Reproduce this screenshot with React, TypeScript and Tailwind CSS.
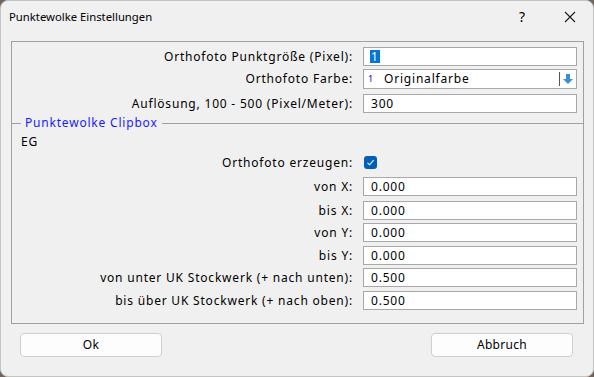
import React from 'react';

type FieldRowProps = {
  label: string;
  value: React.ReactNode;
  top: string;
};

const uiFont = { fontFamily: '"Noto Sans", "Liberation Sans", sans-serif' };

function FieldRow({ label, value, top }: FieldRowProps) {
  return (
    <div className={`flex items-center h-[19px] ${top}`}>
      <div className="w-[342px] text-right pr-[1px] leading-none">{label}</div>
      <div className="ml-[9px] w-[214px] h-[19px] bg-white border border-[#a8a8a8] flex items-center pl-[7px] leading-none">
        {value}
      </div>
    </div>
  );
}

export default function App() {
  return (
    <div className="w-[594px] h-[377px] bg-[#6f6660]" style={uiFont}>
      <div className="w-[594px] h-[377px] rounded-[8px] border border-[#c4c4c4] bg-[#f0f0f0] flex flex-col text-[12px] text-black overflow-hidden">
        {/* Title bar */}
        <div className="h-[32px] flex items-center pl-[8px] shrink-0">
          <span className="flex-1 leading-none text-[11.3px]">Punktewolke Einstellungen</span>
          <span className="w-[20px] text-center text-[14px] leading-none mr-[32px]">?</span>
          <svg width="12" height="12" viewBox="0 0 12 12" className="mr-[17px]">
            <path d="M1 1 L11 11 M11 1 L1 11" stroke="#1a1a1a" strokeWidth="1.1" />
          </svg>
        </div>

        {/* Group */}
        <div className="ml-[10px] mt-[8px] w-[573px] h-[283px] border border-[#a0a0a0] flex flex-col shrink-0 tracking-[0.8px]">
          <FieldRow
            label="Orthofoto Punktgröße (Pixel):"
            value={<span className="bg-[#0078d7] text-white px-[1px] -ml-[1px] leading-[13px]">1</span>}
            top="mt-[5px]"
          />
          <div className="flex items-center h-[20px] mt-[3px]">
            <div className="w-[342px] text-right pr-[1px] leading-none">Orthofoto Farbe:</div>
            <div className="ml-[9px] w-[214px] h-[20px] bg-white border border-[#a8a8a8] flex items-center leading-none">
              <span className="text-[9px] text-[#0000e0] ml-[4px] w-[16px] -mt-[2px] tracking-normal">1</span>
              <span className="flex-1">Originalfarbe</span>
              <div className="w-px h-[14px] bg-[#555]" />
              <svg width="16" height="12" viewBox="0 0 16 12">
                <path d="M6 1 H10 V6 H13 L8 11 L3 6 H6 Z" fill="#3b8fd4" />
              </svg>
            </div>
          </div>
          <FieldRow label="Auflösung, 100 - 500 (Pixel/Meter):" value="300" top="mt-[5px]" />

          {/* Separator */}
          <div className="flex items-center h-[14px] mt-[3px] -mx-px">
            <div className="w-[10px] h-px bg-[#a0a0a0]" />
            <span className="px-[4px] text-[#1a1aff] leading-none">Punktewolke Clipbox</span>
            <div className="flex-1 h-px bg-[#a0a0a0]" />
          </div>

          <div className="h-[14px] mt-[5px] pl-[9px] leading-none flex items-center">EG</div>

          <div className="flex items-center h-[13px] mt-[7px]">
            <div className="w-[342px] text-right pr-[1px] leading-none">Orthofoto erzeugen:</div>
            <div className="ml-[10px] w-[13px] h-[13px] rounded-[3px] bg-[#005fb8] flex items-center justify-center">
              <svg width="9" height="9" viewBox="0 0 9 9">
                <path d="M1.5 4.8 L3.6 6.8 L7.6 2.2" stroke="white" strokeWidth="1.1" fill="none" />
              </svg>
            </div>
          </div>

          <FieldRow label="von X:" value="0.000" top="mt-[8px]" />
          <FieldRow label="bis X:" value="0.000" top="mt-[5px]" />
          <FieldRow label="von Y:" value="0.000" top="mt-[3px]" />
          <FieldRow label="bis Y:" value="0.000" top="mt-[4px]" />
          <FieldRow label="von unter UK Stockwerk (+ nach unten):" value="0.500" top="mt-[3px]" />
          <FieldRow label="bis über UK Stockwerk (+ nach oben):" value="0.500" top="mt-[4px]" />
        </div>

        {/* Buttons */}
        <div className="flex justify-between pl-[19px] pr-[20px] mt-[9px]">
          <button className="w-[142px] h-[24px] rounded-[4px] border border-[#cfcfcf] bg-[#fdfdfd] leading-none text-[12px] tracking-[0.3px]">Ok</button>
          <button className="w-[142px] h-[24px] rounded-[4px] border border-[#cfcfcf] bg-[#fdfdfd] leading-none text-[12px] tracking-[0.3px]">Abbruch</button>
        </div>
      </div>
    </div>
  );
}
